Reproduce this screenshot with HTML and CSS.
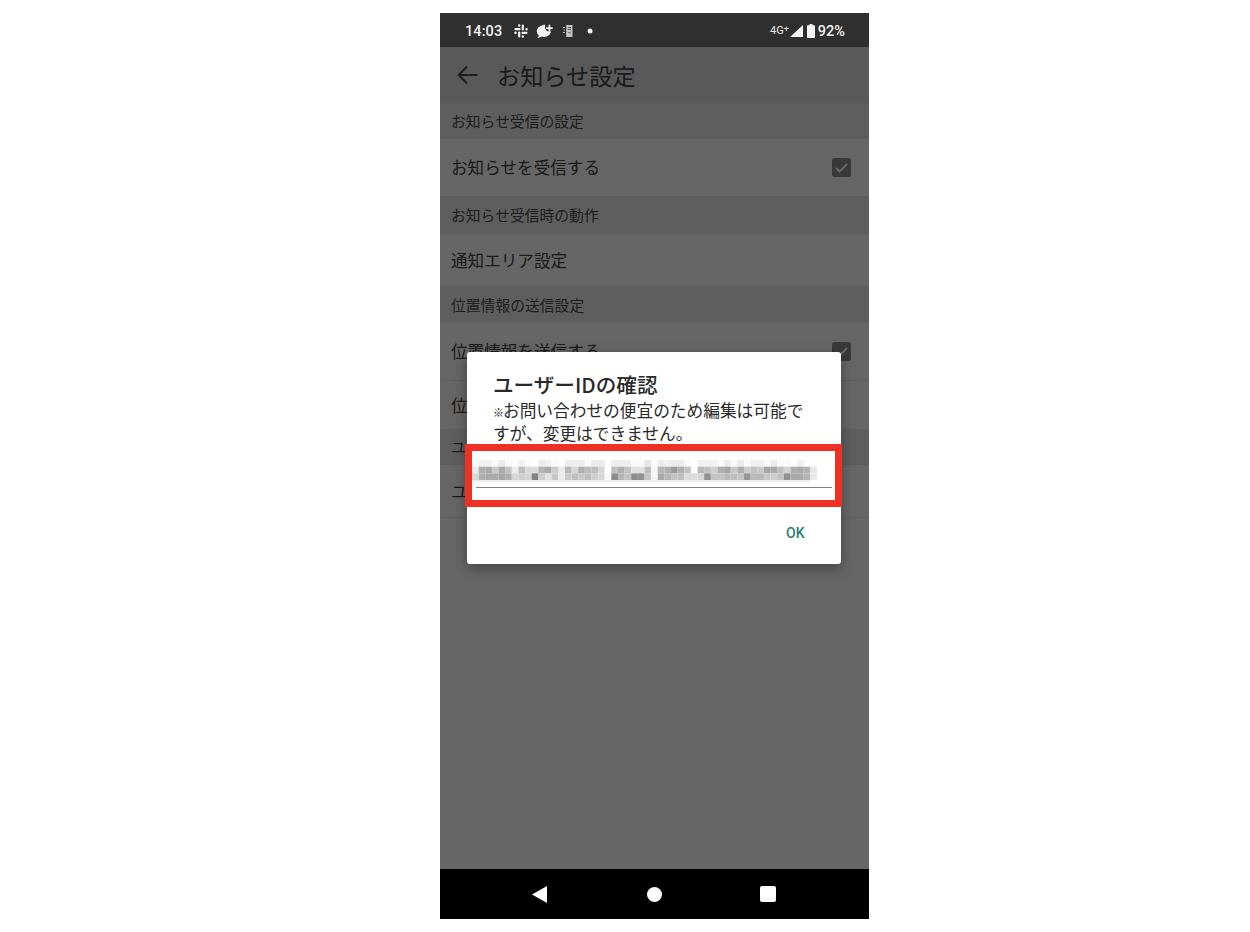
FILE: index.html
```html
<!DOCTYPE html>
<html lang="ja">
<head>
<meta charset="utf-8">
<title>お知らせ設定</title>
<link rel="stylesheet" href="styles.css">
</head>
<body>
<main class="phone">
  <header class="status">
    <span class="time">14:03</span>
    <svg class="ic-slack" viewBox="0 0 14 14"><g class="slack-strokes"><path d="M1.500 5.200h4M8.800 1.500v4M12.500 8.800h-4M5.200 12.500v-4"/><path class="slack-dots" d="M5.200 1.500v.1M12.500 5.200h.1M8.800 12.500v.1M1.500 8.800h.1"/></g></svg>
    <svg class="ic-msg" viewBox="0 0 17 15"><path class="fill" d="M8 1.200C4 1.200.8 3.800.8 7.200c0 1.800.8 3.200 2 4.200-.2 1-.8 2-1.600 2.600 1.800 0 3.300-.6 4.400-1.400.8.2 1.500.3 2.400.3 3.800 0 6.600-2.400 6.900-5.600-.5.2-1 .3-1.500.3-2.500 0-4.500-2-4.500-4.500 0-.8.2-1.500.5-2.200-.1-.1-.2-.2-2.400-.2z"/><path class="fill" d="M12.500 0.800h1.800v2.400h2.400v1.800h-2.400v2.400h-1.800v-2.400h-2.400v-1.800h2.400z"/></svg>
    <svg class="ic-device" viewBox="0 0 10 14"><path class="fill-soft" d="M3.200 1h6.300v12H3.200z"/><path class="cut" d="M4.800 3.500h3.200M4.800 5.500h3.200M5 8c.6 1 2.200 1 2.800 0"/><path class="marks" d="M0 3.500h2M.5 6h1.500M0 8.500h2"/></svg>
    <svg class="ic-dot" viewBox="0 0 6 6"><circle class="fill" cx="3" cy="3" r="2.500"/></svg>
    <span class="net">4G<sup class="plus">+</sup></span>
    <svg class="ic-signal" viewBox="0 0 13 12"><path class="fill" d="M13 0v12H0z"/></svg>
    <svg class="ic-batt" viewBox="0 0 8 14"><path class="fill" d="M2.500 0h3v1.200H7c.6 0 1 .4 1 1V13c0 .6-.4 1-1 1H1c-.6 0-1-.4-1-1V2.200c0-.6.4-1 1-1h1.500z"/></svg>
    <span class="pct">92%</span>
  </header>

  <div class="screen">
    <div class="appbar">
      <svg class="ic-back" viewBox="0 0 24 24"><path d="M21.500 12H3M11 3.500L2.800 12l8.200 8.500"/></svg>
      <h1 class="appbar-title">お知らせ設定</h1>
    </div>
    <section class="list">
      <div class="hdr hdr-a">お知らせ受信の設定</div>
      <div class="row row-a"><span class="row-text">お知らせを受信する</span><svg class="check" viewBox="0 0 19 19"><rect class="check-box" width="19" height="19" rx="2.500"/><path class="check-mark" d="M4 10l3.500 3.500L15 6"/></svg></div>
      <div class="hdr hdr-b">お知らせ受信時の動作</div>
      <div class="row row-b"><span class="row-text">通知エリア設定</span></div>
      <div class="hdr hdr-c">位置情報の送信設定</div>
      <div class="row row-c"><span class="row-text">位置情報を送信する</span><svg class="check" viewBox="0 0 19 19"><rect class="check-box" width="19" height="19" rx="2.500"/><path class="check-mark" d="M4 10l3.500 3.500L15 6"/></svg></div>
      <div class="row row-d"><span class="row-text">位置情報の送信間隔</span></div>
      <div class="hdr hdr-d">ユーザー情報</div>
      <div class="row row-b"><span class="row-text">ユーザーIDの確認</span></div>
    </section>
    <div class="scrim"></div>
    <div class="dialog" role="dialog">
      <h2 class="dialog-title">ユーザーIDの確認</h2>
      <p class="dialog-msg"><span class="note-mark">※</span>お問い合わせの便宜のため編集は可能ですが、変更はできません。</p>
      <div class="field">
        <svg class="mosaic" viewBox="0 0 52 3.300" preserveAspectRatio="none">
          <g>
            <rect x="1" y="0" width="1" height="1" fill="#f0f0f0"/><rect x="2" y="0" width="1" height="1" fill="#f0f0f0"/><rect x="3" y="0" width="1" height="1" fill="#fafafa"/><rect x="4" y="0" width="1" height="1" fill="#ebebeb"/><rect x="5" y="0" width="1" height="1" fill="#fafafa"/><rect x="7" y="0" width="1" height="1" fill="#f0f0f0"/><rect x="8" y="0" width="1" height="1" fill="#fafafa"/><rect x="10" y="0" width="1" height="1" fill="#ebebeb"/><rect x="11" y="0" width="1" height="1" fill="#f0f0f0"/><rect x="12" y="0" width="1" height="1" fill="#fafafa"/><rect x="14" y="0" width="3" height="1" fill="#eeeeee"/><rect x="17" y="0" width="1" height="1" fill="#fafafa"/><rect x="18" y="0" width="2" height="1" fill="#ebebeb"/><rect x="21" y="0" width="3" height="1" fill="#eeeeee"/><rect x="24" y="0" width="2" height="1" fill="#fafafa"/><rect x="26" y="0" width="1" height="1" fill="#e6e6e6"/><rect x="28" y="0" width="1" height="1" fill="#ebebeb"/><rect x="29" y="0" width="1" height="1" fill="#f0f0f0"/><rect x="30" y="0" width="2" height="1" fill="#ebebeb"/><rect x="32" y="0" width="1" height="1" fill="#fafafa"/><rect x="34" y="0" width="3" height="1" fill="#f0f0f0"/><rect x="37" y="0" width="1" height="1" fill="#fafafa"/><rect x="38" y="0" width="1" height="1" fill="#ebebeb"/><rect x="39" y="0" width="1" height="1" fill="#fafafa"/><rect x="40" y="0" width="1" height="1" fill="#ebebeb"/><rect x="41" y="0" width="1" height="1" fill="#fafafa"/><rect x="42" y="0" width="2" height="1" fill="#f0f0f0"/><rect x="44" y="0" width="1" height="1" fill="#fafafa"/><rect x="45" y="0" width="1" height="1" fill="#ebebeb"/><rect x="46" y="0" width="2" height="1" fill="#fafafa"/><rect x="49" y="0" width="1" height="1" fill="#f0f0f0"/>
          </g>
          <g>
            <rect x="0" y="1" width="1" height="1" fill="#ebebeb"/><rect x="1" y="1" width="1" height="1" fill="#afafaf"/><rect x="2" y="1" width="1" height="1" fill="#aaaaaa"/><rect x="3" y="1" width="1" height="1" fill="#c8c8c8"/><rect x="4" y="1" width="1" height="1" fill="#aaaaaa"/><rect x="5" y="1" width="1" height="1" fill="#c3c3c3"/><rect x="6" y="1" width="1" height="1" fill="#ebebeb"/><rect x="7" y="1" width="1" height="1" fill="#bebebe"/><rect x="8" y="1" width="1" height="1" fill="#d7d7d7"/><rect x="9" y="1" width="1" height="1" fill="#dcdcdc"/><rect x="10" y="1" width="1" height="1" fill="#b4b4b4"/><rect x="11" y="1" width="1" height="1" fill="#aaaaaa"/><rect x="12" y="1" width="1" height="1" fill="#cdcdcd"/><rect x="13" y="1" width="1" height="1" fill="#ebebeb"/><rect x="14" y="1" width="1" height="1" fill="#b9b9b9"/><rect x="15" y="1" width="1" height="1" fill="#d7d7d7"/><rect x="16" y="1" width="1" height="1" fill="#afafaf"/><rect x="17" y="1" width="1" height="1" fill="#bebebe"/><rect x="18" y="1" width="1" height="1" fill="#bebebe"/><rect x="19" y="1" width="1" height="1" fill="#d7d7d7"/><rect x="21" y="1" width="1" height="1" fill="#bebebe"/><rect x="22" y="1" width="1" height="1" fill="#afafaf"/><rect x="23" y="1" width="1" height="1" fill="#c3c3c3"/><rect x="24" y="1" width="2" height="1" fill="#e1e1e1"/><rect x="26" y="1" width="1" height="1" fill="#bebebe"/><rect x="27" y="1" width="1" height="1" fill="#f5f5f5"/><rect x="28" y="1" width="1" height="1" fill="#b4b4b4"/><rect x="29" y="1" width="1" height="1" fill="#afafaf"/><rect x="30" y="1" width="1" height="1" fill="#9b9b9b"/><rect x="31" y="1" width="1" height="1" fill="#afafaf"/><rect x="32" y="1" width="1" height="1" fill="#c3c3c3"/><rect x="33" y="1" width="1" height="1" fill="#fafafa"/><rect x="34" y="1" width="1" height="1" fill="#b9b9b9"/><rect x="35" y="1" width="1" height="1" fill="#c0c0c0"/><rect x="36" y="1" width="1" height="1" fill="#cdcdcd"/><rect x="37" y="1" width="1" height="1" fill="#afafaf"/><rect x="38" y="1" width="1" height="1" fill="#a5a5a5"/><rect x="39" y="1" width="1" height="1" fill="#c8c8c8"/><rect x="40" y="1" width="1" height="1" fill="#afafaf"/><rect x="41" y="1" width="1" height="1" fill="#cdcdcd"/><rect x="42" y="1" width="1" height="1" fill="#c3c3c3"/><rect x="43" y="1" width="1" height="1" fill="#c8c8c8"/><rect x="44" y="1" width="1" height="1" fill="#a5a5a5"/><rect x="45" y="1" width="1" height="1" fill="#aaaaaa"/><rect x="46" y="1" width="1" height="1" fill="#bebebe"/><rect x="47" y="1" width="1" height="1" fill="#d2d2d2"/><rect x="48" y="1" width="1" height="1" fill="#afafaf"/><rect x="49" y="1" width="1" height="1" fill="#aaaaaa"/><rect x="50" y="1" width="1" height="1" fill="#b4b4b4"/><rect x="51" y="1" width="1" height="1" fill="#e8e8e8"/>
          </g>
          <g>
            <rect x="0" y="2" width="1" height="1" fill="#d7d7d7"/><rect x="1" y="2" width="1" height="1" fill="#afafaf"/><rect x="2" y="2" width="2" height="1" fill="#aaaaaa"/><rect x="4" y="2" width="1" height="1" fill="#a5a5a5"/><rect x="5" y="2" width="1" height="1" fill="#afafaf"/><rect x="6" y="2" width="1" height="1" fill="#d7d7d7"/><rect x="7" y="2" width="1" height="1" fill="#cdcdcd"/><rect x="8" y="2" width="1" height="1" fill="#d2d2d2"/><rect x="9" y="2" width="1" height="1" fill="#828282"/><rect x="10" y="2" width="1" height="1" fill="#cdcdcd"/><rect x="11" y="2" width="1" height="1" fill="#e1e1e1"/><rect x="12" y="2" width="1" height="1" fill="#c8c8c8"/><rect x="13" y="2" width="1" height="1" fill="#ebebeb"/><rect x="14" y="2" width="1" height="1" fill="#c8c8c8"/><rect x="15" y="2" width="1" height="1" fill="#bebebe"/><rect x="16" y="2" width="1" height="1" fill="#c8c8c8"/><rect x="17" y="2" width="1" height="1" fill="#bebebe"/><rect x="18" y="2" width="1" height="1" fill="#cdcdcd"/><rect x="19" y="2" width="1" height="1" fill="#d7d7d7"/><rect x="20" y="2" width="1" height="1" fill="#fafafa"/><rect x="21" y="2" width="1" height="1" fill="#8c8c8c"/><rect x="22" y="2" width="1" height="1" fill="#b4b4b4"/><rect x="23" y="2" width="1" height="1" fill="#c3c3c3"/><rect x="24" y="2" width="1" height="1" fill="#8c8c8c"/><rect x="25" y="2" width="1" height="1" fill="#919191"/><rect x="26" y="2" width="1" height="1" fill="#c3c3c3"/><rect x="27" y="2" width="1" height="1" fill="#f5f5f5"/><rect x="28" y="2" width="1" height="1" fill="#aaaaaa"/><rect x="29" y="2" width="1" height="1" fill="#b4b4b4"/><rect x="30" y="2" width="1" height="1" fill="#c3c3c3"/><rect x="31" y="2" width="1" height="1" fill="#bebebe"/><rect x="32" y="2" width="1" height="1" fill="#dcdcdc"/><rect x="33" y="2" width="1" height="1" fill="#dcdcdc"/><rect x="34" y="2" width="1" height="1" fill="#d7d7d7"/><rect x="35" y="2" width="1" height="1" fill="#919191"/><rect x="36" y="2" width="2" height="1" fill="#c3c3c3"/><rect x="38" y="2" width="1" height="1" fill="#b9b9b9"/><rect x="39" y="2" width="1" height="1" fill="#bebebe"/><rect x="40" y="2" width="1" height="1" fill="#c3c3c3"/><rect x="41" y="2" width="1" height="1" fill="#969696"/><rect x="42" y="2" width="2" height="1" fill="#b9b9b9"/><rect x="44" y="2" width="1" height="1" fill="#c8c8c8"/><rect x="45" y="2" width="1" height="1" fill="#cdcdcd"/><rect x="46" y="2" width="1" height="1" fill="#c3c3c3"/><rect x="47" y="2" width="1" height="1" fill="#919191"/><rect x="48" y="2" width="2" height="1" fill="#aaaaaa"/><rect x="50" y="2" width="1" height="1" fill="#b4b4b4"/><rect x="51" y="2" width="1" height="1" fill="#e8e8e8"/>
          </g>
          <rect x="0" y="3" width="51" height="0.300" fill="#eeeeee"/>
        </svg>
        <div class="field-line"></div>
      </div>
      <div class="actions"><span class="ok">OK</span></div>
    </div>
  </div>

  <nav class="navbar">
    <svg class="nav-back" viewBox="0 0 15 17"><path d="M15 0v17L0 8.500z"/></svg>
    <svg class="nav-home" viewBox="0 0 15 15"><circle cx="7.500" cy="7.500" r="7.500"/></svg>
    <svg class="nav-recent" viewBox="0 0 16 16"><rect width="16" height="16" rx="2"/></svg>
  </nav>
</main>
</body>
</html>
```
FILE: styles.css
```css
* { box-sizing: border-box; }
html, body { margin: 0; background: #fff; }
body { padding: 13px 0 0 440px; font-family: "Noto Sans CJK JP", "Noto Sans", sans-serif; }
h1, h2, p { margin: 0; font-weight: 400; }

.phone { width: 429px; height: 906px; display: flex; flex-direction: column; }

/* status bar */
.status { height: 34px; flex: none; background: #2f2f2f; color: #f2f2f2; display: flex; align-items: center; padding: 2px 0 0 25px; font-family: Roboto, "Liberation Sans", sans-serif; }
.time { font-size: 14.500px; font-weight: 500; width: 49px; letter-spacing: .1px; }
.fill { fill: #f4f4f4; }
.slack-strokes { fill: none; stroke: #f4f4f4; stroke-width: 2.200; stroke-linecap: round; }
.slack-dots { stroke-width: 2.400; }
.ic-slack { width: 14px; height: 14px; flex: none; }
.ic-msg { width: 17px; height: 15px; flex: none; margin-left: 8px; }
.ic-device { width: 10px; height: 14px; flex: none; margin-left: 10px; }
.fill-soft { fill: #c4c4c4; }
.cut { fill: none; stroke: #555; stroke-width: 1; }
.marks { fill: none; stroke: #c4c4c4; stroke-width: 1; }
.ic-dot { width: 6px; height: 6px; flex: none; margin-left: 14px; }
.net { margin-left: auto; font-size: 11px; font-weight: 400; display: flex; align-items: flex-start; line-height: 12px; color: #e8e8e8; margin-top: -1px; }
.plus { font-size: 9px; line-height: 9px; vertical-align: baseline; }
.ic-signal { width: 13px; height: 12px; flex: none; margin-left: 1px; }
.ic-batt { width: 8px; height: 14px; flex: none; margin-left: 4px; }
.pct { font-size: 14.500px; font-weight: 500; margin-left: 3px; margin-right: 24px; }

/* screen under the dialog */
.screen { flex: 1; position: relative; background: #fff; min-height: 0; }
.appbar { height: 56px; background: #dedede; display: flex; align-items: center; padding-left: 16px; }
.ic-back { width: 24px; height: 24px; flex: none; fill: none; stroke: #4a4a4a; stroke-width: 2; }
.appbar-title { font-size: 23.200px; color: #444; margin-left: 17px; margin-top: -1px; }
.list { display: flex; flex-direction: column; }
.hdr { background: #ececec; color: #4c4c4c; font-size: 14.800px; padding: 0 0 1px 11px; display: flex; align-items: center; border-bottom: 1px solid #e4e4e4; }
.hdr-a { height: 36px; }
.hdr-b { height: 37px; }
.hdr-c { height: 35px; padding-bottom: 0; }
.hdr-d { height: 35px; }
.row { color: #444; font-size: 16.600px; padding: 0 18px 0 11px; display: flex; align-items: center; justify-content: space-between; border-bottom: 1px solid #ececec; }
.row-text { margin-top: -1px; }
.row-a { height: 58px; }
.row-b { height: 53px; }
.row-c { height: 59px; }
.row-d { height: 49px; }
.check { width: 19px; height: 19px; flex: none; }
.check-box { fill: #8f8f8f; }
.check-mark { fill: none; stroke: #fff; stroke-width: 2; }

.scrim { position: absolute; inset: 0; background: rgba(0, 0, 0, .6); }

/* dialog */
.dialog { position: absolute; left: 27px; top: 305px; width: 374px; height: 212px; background: #fff; border-radius: 3px; box-shadow: 0 4px 14px rgba(0, 0, 0, .35); padding-top: 20px; display: flex; flex-direction: column; }
.dialog-title { font-size: 20.600px; font-weight: 500; color: #2a2a2a; line-height: 25px; padding-left: 26px; }
.dialog-msg { font-size: 16.700px; line-height: 21px; color: #2a2a2a; padding: 0 30px 0 26px; margin-top: 3px; }
.note-mark { font-size: 11px; letter-spacing: -1px; color: #111; }
.field { margin: 0 0 0 -2px; width: 376.700px; height: 63px; border: 7px solid #ee3124; padding: 9px 2px 0 4px; flex: none; }
.mosaic { display: block; width: 345px; height: 22px; margin-left: -4px; filter: blur(.5px); }
.field-line { height: 1px; background: #808080; margin: 5px 1px 0 0; }
.actions { flex: 1; display: flex; justify-content: flex-end; align-items: center; padding: 0 36px 6px 0; }
.ok { color: #2a7f72; font-size: 14px; font-weight: 500; font-family: Roboto, "Liberation Sans", sans-serif; letter-spacing: .3px; }

/* nav */
.navbar { height: 50px; flex: none; background: #000; display: flex; align-items: center; padding-left: 92px; }
.navbar svg { fill: #fff; flex: none; }
.nav-back { width: 15px; height: 17px; }
.nav-home { width: 15px; height: 15px; margin-left: 100px; }
.nav-recent { width: 16px; height: 16px; margin-left: 98px; }
```
